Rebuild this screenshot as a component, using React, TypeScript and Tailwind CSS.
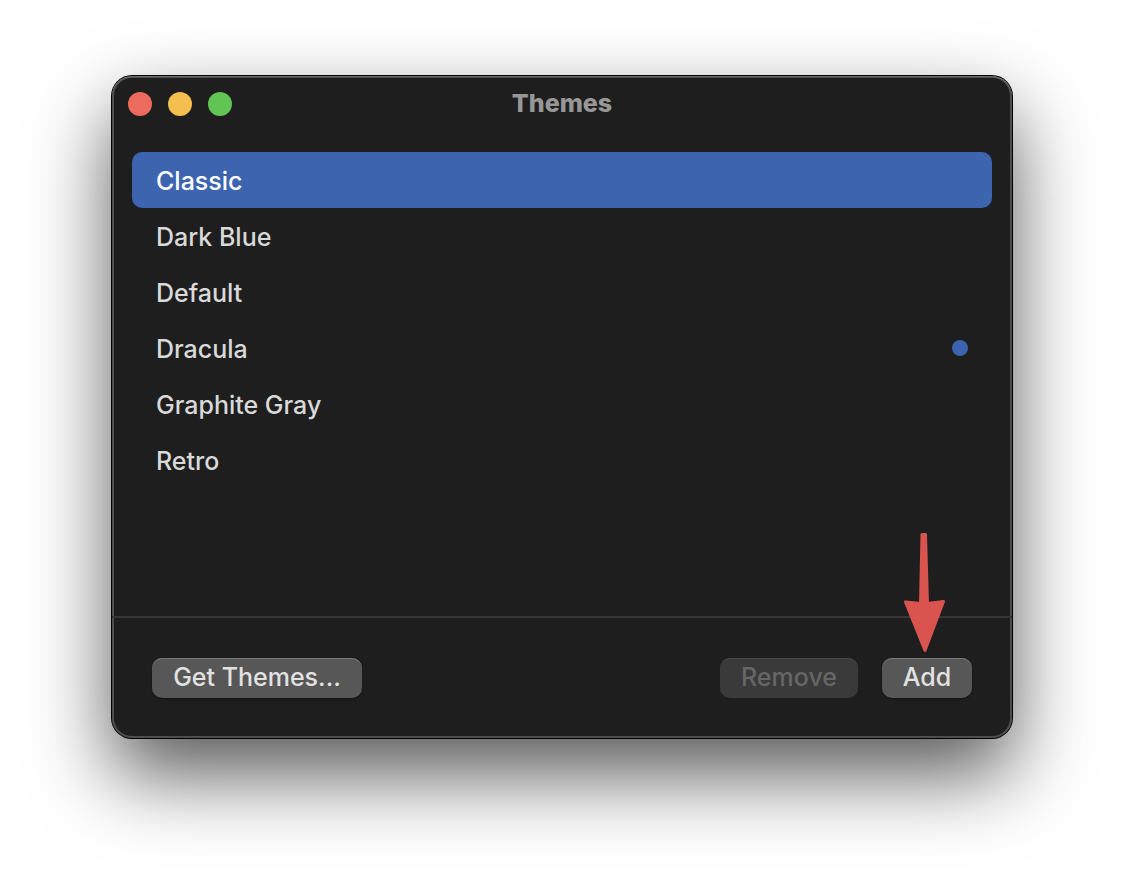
import { useState } from "react";
import clsx from "clsx";

const themes = ["Classic", "Dark Blue", "Default", "Dracula", "Graphite Gray", "Retro"];
const activeTheme = "Dracula";

const trafficLights = [
  { label: "Close", color: "bg-[#ed6a5e]" },
  { label: "Minimize", color: "bg-[#f5bf4f]" },
  { label: "Zoom", color: "bg-[#61c554]" },
];

const pushButton =
  "flex h-10 items-center justify-center rounded-[10px] pb-[2px] text-[25px] leading-8 font-medium";
const enabledButton =
  "bg-[#575757] text-[#e2e2e2] shadow-[inset_0_1px_0_#787878,0_1px_2px_rgba(0,0,0,0.4)]";
const disabledButton = "bg-[#3a3a3a] text-[#666666] shadow-[inset_0_1px_0_#474747]";

function TitleBar() {
  return (
    <header className="grid grid-cols-[1fr_auto_1fr] items-center px-4 pt-[10px]">
      <div className="flex gap-4">
        {trafficLights.map((light) => (
          <button
            key={light.label}
            type="button"
            aria-label={light.label}
            className={clsx("size-6 rounded-full", light.color)}
          />
        ))}
      </div>
      <h1 className="pb-[2px] text-[25px] leading-[34px] font-extrabold text-[#979797]">Themes</h1>
    </header>
  );
}

function ThemeList() {
  const [selected, setSelected] = useState("Classic");
  return (
    <ul className="grow px-5 pt-[30px] pb-32">
      {themes.map((theme) => (
        <li key={theme}>
          <button
            type="button"
            aria-pressed={theme === selected}
            onClick={() => setSelected(theme)}
            className={clsx(
              "flex h-14 w-full items-center justify-between rounded-[10px] px-6 text-left text-[25px] leading-8 font-medium",
              theme === selected ? "bg-[#3c64af] text-white" : "text-[#d9d9d9]",
            )}
          >
            <span className="pt-[2px]">{theme}</span>
            {theme === activeTheme && <span className="size-4 rounded-full bg-[#3c64af]" />}
          </button>
        </li>
      ))}
    </ul>
  );
}

function Arrow() {
  return (
    <svg
      aria-hidden="true"
      viewBox="0 0 46 122"
      className="pointer-events-none absolute bottom-full left-1/2 mb-1 h-[122px] w-[46px] -translate-x-1/2"
    >
      <path
        d="M18 2.5 H21.5 L23.5 71.5 L39.5 69.5 L21 118.5 L1.5 70 L16.5 71.5 Z"
        fill="#d9534f"
        stroke="#d9534f"
        strokeWidth="3"
        strokeLinejoin="round"
      />
    </svg>
  );
}

export default function App() {
  return (
    <div className="min-h-screen bg-white px-28 pt-[76px] pb-[148px] font-['Inter',sans-serif]">
      <main className="flex flex-col rounded-[20px] bg-[#1e1e1e] shadow-[inset_0_1px_0_#6e6e6e,inset_0_0_0_2px_#4e4e4e,0_0_0_1px_#000000,0_36px_80px_rgba(0,0,0,0.66)]">
        <TitleBar />
        <ThemeList />
        <footer className="flex items-center gap-6 border-t-2 border-[#373737] px-10 py-10">
          <button type="button" className={clsx(pushButton, enabledButton, "mr-auto w-[210px]")}>
            Get Themes...
          </button>
          <button type="button" disabled className={clsx(pushButton, disabledButton, "w-[138px]")}>
            Remove
          </button>
          <div className="relative">
            <button type="button" className={clsx(pushButton, enabledButton, "w-[90px]")}>
              Add
            </button>
            <Arrow />
          </div>
        </footer>
      </main>
    </div>
  );
}
